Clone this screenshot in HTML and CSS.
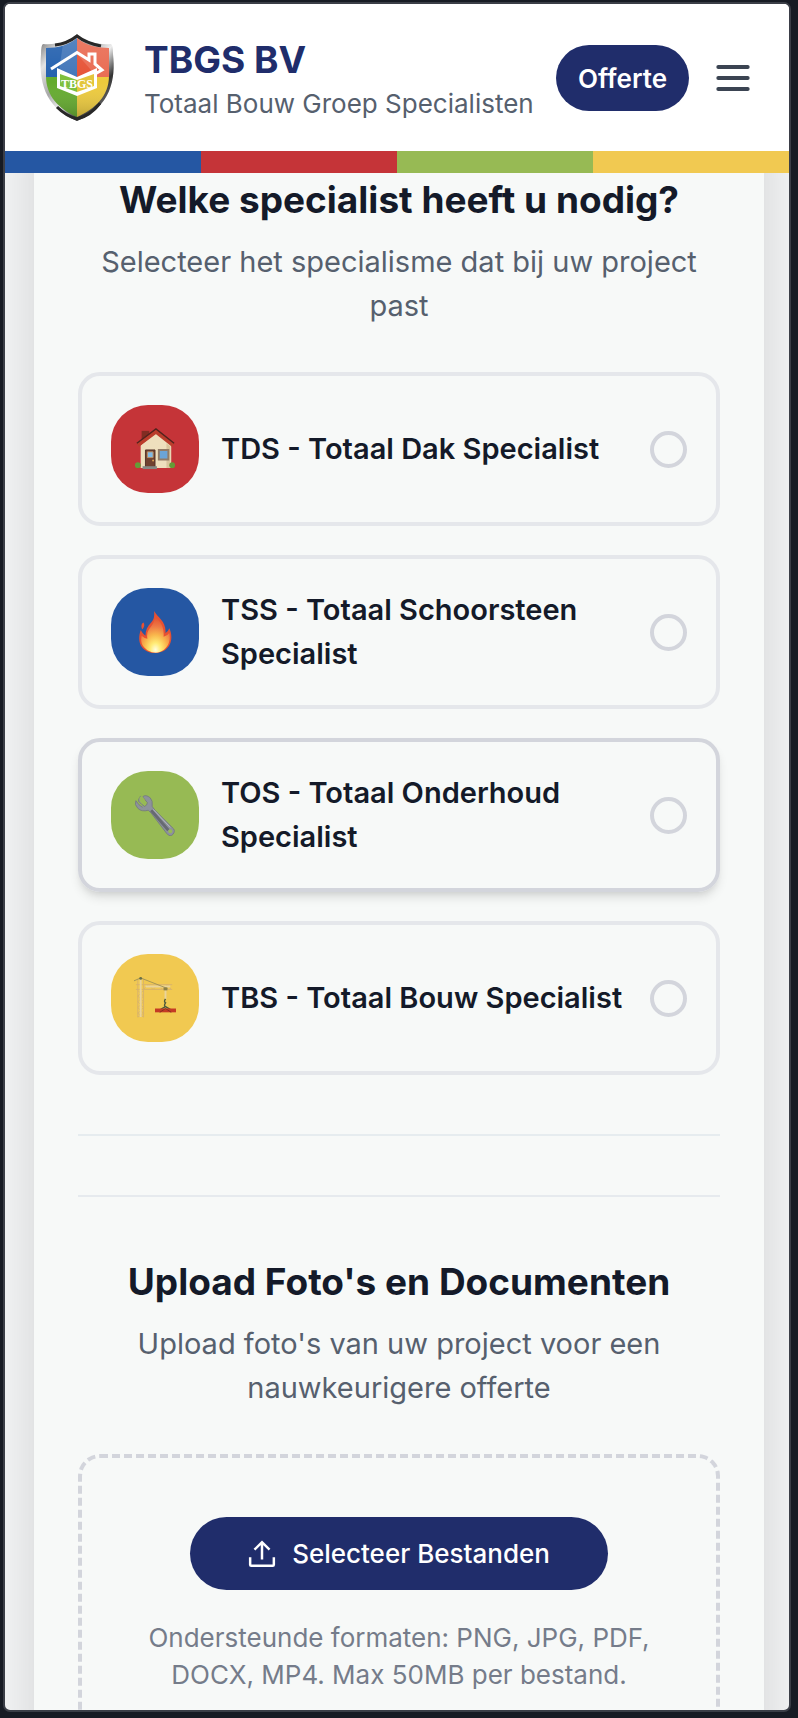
FILE: index.html
```html
<!DOCTYPE html>
<html lang="nl">
<head>
<meta charset="utf-8">
<meta name="viewport" content="width=device-width, initial-scale=1">
<title>TBGS BV - Offerte</title>
<link rel="stylesheet" href="styles.css">
</head>
<body>
<div class="screen">
  <header class="header">
    <svg class="logo" viewBox="0 0 88 88" role="img" aria-label="TBGS logo">
      <defs>
        <linearGradient id="rim" x1="0" y1="0" x2="1" y2="1">
          <stop offset="0" stop-color="#666"/><stop offset=".2" stop-color="#e4e4e4"/><stop offset=".4" stop-color="#a8a8a8"/><stop offset=".55" stop-color="#eee"/><stop offset=".72" stop-color="#333"/><stop offset="1" stop-color="#aaa"/>
        </linearGradient>
        <linearGradient id="shade" x1="0" y1="0" x2="0" y2="1">
          <stop offset="0" stop-color="#fff" stop-opacity=".12"/><stop offset=".55" stop-color="#fff" stop-opacity="0"/><stop offset="1" stop-color="#000" stop-opacity=".25"/>
        </linearGradient>
        <clipPath id="shield"><path d="M43 4C35 11 24 14 12 14V42C12 62 25 75 43 83C61 75 75 62 75 42V14C62 14 51 11 43 4Z"/></clipPath>
      </defs>
      <path fill="url(#rim)" d="M43 1C34 8 22 11 9 10Q7 11 7 20C5 45 9 73 43 87C77 73 82 45 79 20Q79 11 77 10C64 11 52 8 43 1Z"/>
      <path fill="none" stroke="#282828" stroke-width="3" d="M21 11C30 10 38 6 43 2C48 6 57 10 67 12M23 73C29 79 36 83 43 85C51 83 60 77 66 69"/>
      <g clip-path="url(#shield)">
        <path fill="#2360ae" d="M0 0h43v43H0z"/>
        <path fill="#e65336" d="M43 0h45v43H43z"/>
        <path fill="#64ab2d" d="M0 43h43v45H0z"/>
        <path fill="#edca3c" d="M43 43h45v45H43z"/>
        <path fill="#fff" opacity=".14" d="M29 10L43 4v39H24zM43 4l32 10v29H63L43 20z"/>
        <path fill="url(#shade)" d="M0 0h88v88H0z"/>
      </g>
      <path fill="#fff" d="M23 34L43 43L63 34V54L43 62L23 54Z"/>
      <path fill="#7fc03d" d="M26 40L43 46V58L26 52Z"/>
      <path fill="#e3c63c" d="M60 40L43 46V58L60 52Z"/>
      <path fill="none" stroke="#fff" stroke-width="3" d="M17 35L43 18.500L55 26V20H61V30L68 36L61 40"/>
      <text class="logo-text" x="27" y="54" fill="#fff">TBGS</text>
    </svg>
    <div class="brand">
      <div class="brand-name">TBGS BV</div>
      <div class="brand-line">Totaal Bouw Groep Specialisten</div>
    </div>
    <button class="quote" type="button">Offerte</button>
    <button class="menu" type="button" aria-label="Menu">
      <svg viewBox="0 0 24 24"><path d="M4 6h16M4 12h16M4 18h16" fill="none" stroke="currentColor" stroke-width="2.200" stroke-linecap="round"/></svg>
    </button>
  </header>
  <div class="stripes"><i class="blue"></i><i class="red"></i><i class="green"></i><i class="yellow"></i></div>

  <main class="content">
    <form class="panel">
      <section>
        <h2>Welke specialist heeft u nodig?</h2>
        <p class="intro">Selecteer het specialisme dat bij uw project past</p>
        <div class="options">
          <label class="option">
            <span class="badge red">
              <svg viewBox="0 0 44 44" aria-hidden="true">
                <path fill="#812c22" d="M8 3h8v13H8z"/>
                <path fill="#eedfbd" d="M7 18L23 5L39 18V42H7Z"/>
                <path fill="#d9c49c" d="M34 16l4 3v23h-4z"/>
                <path fill="none" stroke="#bb3d2c" stroke-width="4" d="M4 18L23 4L41 18"/>
                <path fill="none" stroke="#51231d" stroke-width="1.5" d="M3 16L23 1L42 16"/>
                <path fill="#704130" stroke="#513026" d="M12 23h10v18H12z"/>
                <path fill="#7fb9e5" stroke="#bb9166" d="M14 25h6v6h-6z"/>
                <path fill="#6ba4d7" stroke="#927b66" stroke-width="2" d="M26 23h10v10H26z"/>
                <circle cx="20" cy="34" r="1" fill="#e0a757"/>
                <path fill="#858884" d="M9 40h15v3H9z"/>
                <circle cx="4" cy="39" r="3" fill="#659c37"/><circle cx="40" cy="39" r="3" fill="#659c37"/>
              </svg>
            </span>
            <span class="option-name">TDS - Totaal Dak Specialist</span>
            <input type="radio" name="specialist" value="tds">
          </label>
          <label class="option">
            <span class="badge blue">
              <svg viewBox="0 0 44 44" aria-hidden="true">
                <defs>
                  <radialGradient id="flame" cx=".5" cy=".92" r=".85"><stop offset="0" stop-color="#fffde0"/><stop offset=".22" stop-color="#ffeb75"/><stop offset=".48" stop-color="#f9b64c"/><stop offset=".75" stop-color="#ee7845"/><stop offset="1" stop-color="#e45632"/></radialGradient>
                </defs>
                <path fill="#e75132" d="M8 18Q7 13 10 12Q12 15 9 19Z"/>
                <path fill="#e75132" d="M21 0C25 7 34 11 33 23Q36 21 37 18C42 29 38 40 28 43Q21 46 13 42C5 37 4 29 7 20Q9 24 12 26C12 20 14 16 18 12Q22 8 21 0Z"/>
                <path fill="url(#flame)" d="M22 5C26 11 32 14 31 27Q35 26 37 23C39 32 35 40 27 43Q21 45 14 41C7 36 7 31 8 26Q11 29 14 29C12 17 22 17 22 5Z"/>
              </svg>
            </span>
            <span class="option-name">TSS - Totaal Schoorsteen Specialist</span>
            <input type="radio" name="specialist" value="tss">
          </label>
          <label class="option active">
            <span class="badge green">
              <svg viewBox="0 0 44 44" aria-hidden="true">
                <path fill="#8d929c" stroke="#717580" stroke-width=".8" d="M7 2Q3 7 6 9L11 13Q14 12 14 9L9 3Q12 0 17 4Q20 7 19 13L22 17L40 35Q44 38 41 42Q38 46 34 41L18 20L15 17Q8 19 4 15Q0 11 2 7Q5 12 9 14"/>
                <path fill="#97ba54" d="M6 3Q5 8 8 10Q11 11 12 9Q12 6 9 3Z"/>
                <path fill="none" stroke="#676a72" stroke-width="3" d="M18 17L36 38"/>
                <path fill="none" stroke="#b4b7bf" stroke-width="1" d="M20 16L38 35"/>
                <circle cx="38" cy="39" r="2" fill="#97ba54"/>
              </svg>
            </span>
            <span class="option-name">TOS - Totaal Onderhoud Specialist</span>
            <input type="radio" name="specialist" value="tos">
          </label>
          <label class="option">
            <span class="badge yellow">
              <svg viewBox="0 0 44 44" aria-hidden="true">
                <path fill="none" stroke="#d9b36a" stroke-width="1" d="M4 2v40M10 2v40M2 8h38M2 13h38M4 14l6 6-6 6 6 6-6 6 6 4M10 14l-6 6 6 6-6 6 6 6-6 4M10 13l5-5 5 5 5-5 5 5 5-5 4 5"/>
                <path fill="none" stroke="#ead49b" stroke-width="2" d="M7 2v40M12 10h26M33 14v9"/>
                <path fill="none" stroke="#a39355" stroke-width="1" d="M0 4L7 1L35 12"/>
                <circle cx="7" cy="1.500" r="1.500" fill="#697048"/>
                <path fill="#8b8047" d="M31 11h4v3h-4z"/>
                <path fill="none" stroke="#4d583d" stroke-width="1.500" d="M33 23q-2 3 0 4q-2 3 0 4l-5 3M33 31l5 3"/>
                <path fill="#c43a24" d="M22 33h22v4H22z"/>
                <path fill="none" stroke="#842e20" d="M27 37l6-4 6 4"/>
              </svg>
            </span>
            <span class="option-name">TBS - Totaal Bouw Specialist</span>
            <input type="radio" name="specialist" value="tbs">
          </label>
        </div>
      </section>
      <hr>
      <section class="upload">
        <h2>Upload Foto's en Documenten</h2>
        <p class="intro">Upload foto's van uw project voor een nauwkeurigere offerte</p>
        <div class="dropzone">
          <button class="select-files" type="button">
            <svg viewBox="0 0 26 26" aria-hidden="true"><path d="M2 16v7q0 1 1 1h20q1 0 1-1v-7M13 18V3M6 9l7-7 7 7" fill="none" stroke="currentColor" stroke-width="2.300"/></svg>
            Selecteer Bestanden
          </button>
          <p class="formats">Ondersteunde formaten: PNG, JPG, PDF, DOCX, MP4. Max 50MB per bestand.</p>
        </div>
      </section>
    </form>
  </main>
</div>
</body>
</html>
```
FILE: styles.css
```css
* {
  box-sizing: border-box;
}

body {
  margin: 0;
  height: 100vh;
  padding: 2px 7px 6px 3px;
  background: #171b24;
  color: #141a29;
  font-family: Inter, "Liberation Sans", sans-serif;
}

h2,
p {
  margin: 0;
}

button {
  border: 0;
  font-family: inherit;
  cursor: pointer;
}

.screen {
  display: flex;
  flex-direction: column;
  height: 100%;
  overflow: hidden;
  border: 2px solid #3b3e47;
  border-radius: 7px;
  background: #f9fafb;
}

.header {
  position: relative;
  z-index: 1;
  display: flex;
  flex: none;
  align-items: center;
  padding: 30px 34px 29px 29px;
  background: #fff;
}

.logo {
  flex: none;
  width: 88px;
  height: 88px;
}

.logo-text {
  font: bold 12px "Liberation Serif", serif;
}

.brand {
  flex: 1;
  margin-left: 22px;
  white-space: nowrap;
}

.brand-name {
  color: #202d6b;
  font-size: 37px;
  font-weight: 700;
  line-height: 51px;
}

.brand-line {
  color: #56606e;
  font-size: 26px;
  line-height: 37px;
}

.quote {
  height: 66px;
  padding: 0 22px;
  border-radius: 33px;
  background: #202d6b;
  color: #fff;
  font-size: 26px;
  font-weight: 600;
}

.menu {
  display: flex;
  margin-left: 22px;
  padding: 0;
  background: none;
  color: #3b4452;
}

.menu svg {
  width: 44px;
  height: 44px;
}

.stripes {
  position: relative;
  z-index: 1;
  display: flex;
  flex: none;
  height: 22px;
}

.stripes i {
  flex: 1;
}

.blue {
  background: #2557a3;
}

.red {
  background: #c53438;
}

.green {
  background: #97ba54;
}

.yellow {
  background: #f1c951;
}

.content {
  flex: 1;
  min-height: 0;
  margin-top: -75px;
  padding: 0 25px 0 29px;
  overflow: hidden;
}

.panel {
  padding: 76px 44px 59px;
  background: #f7f9f8;
  box-shadow: 0 0 70px rgba(0, 0, 0, 0.18);
}

h2 {
  font-size: 37px;
  font-weight: 700;
  line-height: 51px;
  text-align: center;
}

.intro {
  margin: 15px 0 44px;
  color: #56606e;
  font-size: 29px;
  line-height: 44px;
  text-align: center;
}

.options {
  display: grid;
  gap: 29px;
}

.option {
  display: flex;
  align-items: center;
  gap: 22px;
  padding: 29px;
  border: 4px solid #e5e7eb;
  border-radius: 22px;
  cursor: pointer;
}

.option.active {
  border-color: #d3d5dc;
  box-shadow: 0 7px 11px -2px rgba(0, 0, 0, 0.12), 0 4px 7px -4px rgba(0, 0, 0, 0.1);
}

.badge {
  display: flex;
  flex: none;
  align-items: center;
  justify-content: center;
  width: 88px;
  height: 88px;
  border-radius: 37px;
}

.badge svg {
  width: 42px;
  height: 42px;
}

.option-name {
  flex: 1;
  font-size: 29px;
  font-weight: 600;
  line-height: 44px;
}

.option input {
  flex: none;
  width: 37px;
  height: 37px;
  margin: 0;
  border: 4px solid #d3d5dc;
  border-radius: 50%;
  appearance: none;
}

.option input:checked {
  border-width: 11px;
  border-color: #202d6b;
}

hr {
  margin: 59px 0 0;
  border: 0;
  border-top: 2px solid #e6ecef;
}

.upload {
  margin-top: 59px;
  padding-top: 59px;
  border-top: 2px solid #e6eaee;
}

.dropzone {
  display: flex;
  flex-direction: column;
  align-items: center;
  padding: 59px;
  border: 4px dashed #d3d5dc;
  border-radius: 22px;
}

.select-files {
  display: flex;
  align-items: center;
  gap: 16px;
  height: 73px;
  padding: 0 58px;
  border-radius: 37px;
  background: #202d6b;
  color: #fff;
  font-size: 26px;
  font-weight: 500;
}

.select-files svg {
  width: 28px;
  height: 28px;
}

.formats {
  margin-top: 29px;
  color: #757c8a;
  font-size: 26px;
  line-height: 37px;
  text-align: center;
}
```
